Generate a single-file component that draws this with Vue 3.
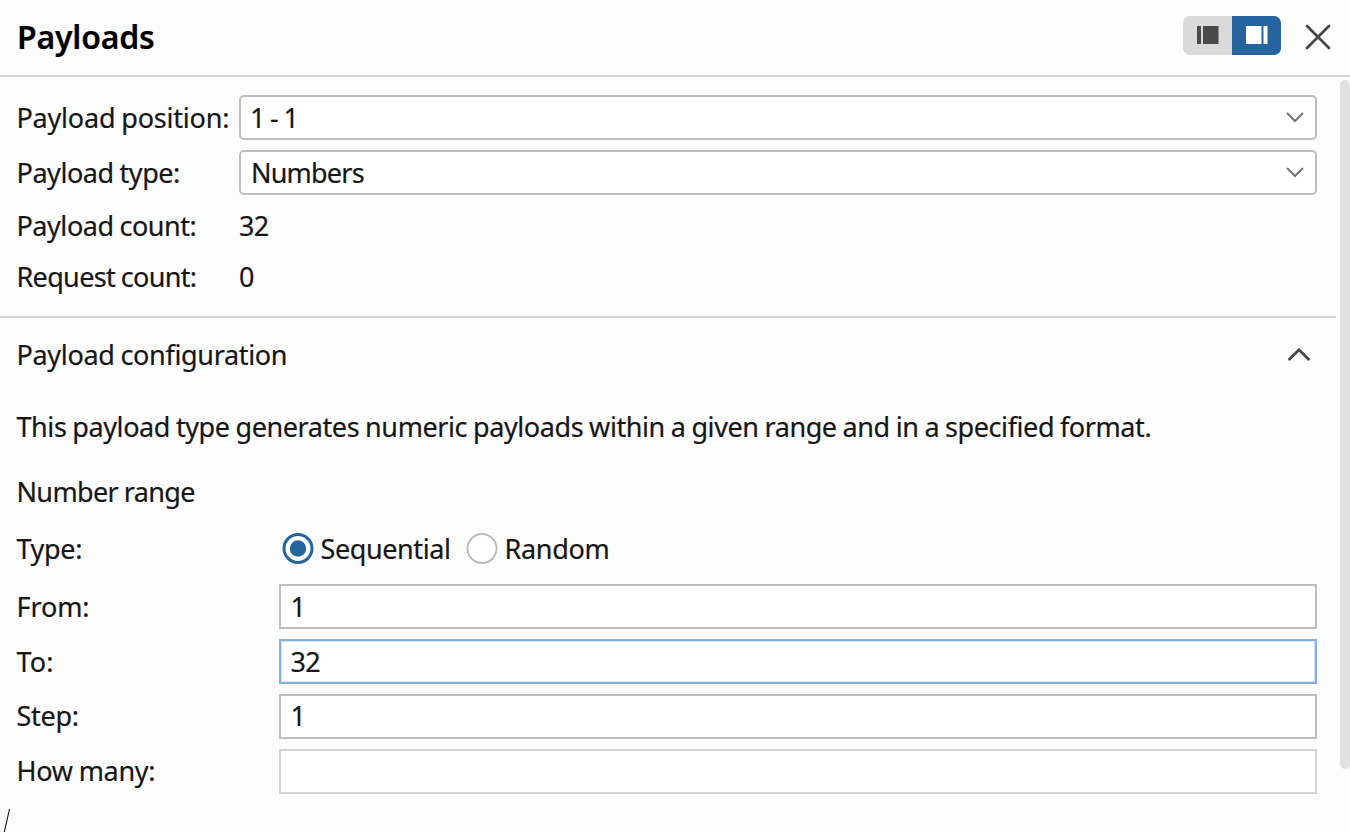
<script setup>
import { ref } from 'vue'

const position = ref('1 - 1')
const type = ref('Numbers')
const fields = ref([
  { key: 'from', label: 'From:', value: '1' },
  { key: 'to', label: 'To:', value: '32' },
  { key: 'step', label: 'Step:', value: '1' },
  { key: 'many', label: 'How many:', value: '' }
])
</script>

<template>
  <main class="panel">
    <header class="head">
      <h1 class="title">Payloads</h1>
      <div class="tools">
        <div class="toggle">
          <button class="seg">
            <svg width="22" height="18" viewBox="0 0 22 18"><path d="M0 0h4v18H0zM6 0h15.500v18H6z" fill="#4a4a4a" /></svg>
          </button>
          <button class="seg on">
            <svg width="22" height="18" viewBox="0 0 22 18"><path d="M0 0h15.500v18H0zM17.500 0h4v18h-4z" fill="#fff" /></svg>
          </button>
        </div>
        <svg class="close" width="26" height="26" viewBox="0 0 26 26"><path d="M2 2l22 22M24 2L2 24" fill="none" stroke="#484848" stroke-width="2.800" stroke-linecap="round" /></svg>
      </div>
    </header>

    <div class="body">
      <div class="content">
        <section class="summary">
          <div class="row combo-row">
            <span class="label"><span class="t-position">Payload position:</span></span>
            <div class="combo"><span class="t-one">{{ position }}</span>
              <svg width="18" height="11" viewBox="0 0 18 11"><path d="M1.500 1.500L9 9l7.500-7.500" fill="none" stroke="#757575" stroke-width="2" stroke-linecap="round" /></svg>
            </div>
          </div>
          <div class="row combo-row">
            <span class="label"><span class="t-type">Payload type:</span></span>
            <div class="combo"><span class="t-numbers">{{ type }}</span>
              <svg width="18" height="11" viewBox="0 0 18 11"><path d="M1.500 1.500L9 9l7.500-7.500" fill="none" stroke="#757575" stroke-width="2" stroke-linecap="round" /></svg>
            </div>
          </div>
          <div class="row count-row"><span class="label"><span class="t-pcount">Payload count:</span></span><span class="t-value">32</span></div>
          <div class="row count-row"><span class="label"><span class="t-rcount">Request count:</span></span><span class="t-value">0</span></div>
        </section>

        <section class="config">
          <div class="config-head">
            <h2 class="t-config">Payload configuration</h2>
            <svg width="24" height="14" viewBox="0 0 24 14"><path d="M2.500 11.300L12 1.800l9.500 9.500" fill="none" stroke="#484848" stroke-width="2.800" stroke-linecap="round" /></svg>
          </div>
          <p class="desc"><span class="t-desc">This payload type generates numeric payloads within a given range and in a specified format.</span></p>
          <h3 class="range"><span class="t-range">Number range</span></h3>
          <div class="type-row">
            <span class="flabel"><span class="t-kind">Type:</span></span>
            <div class="radio">
              <svg width="32" height="32" viewBox="0 0 32 32"><circle cx="16" cy="15.500" r="14" fill="#fff" stroke="#26649f" stroke-width="3" /><circle cx="16" cy="15.500" r="8.200" fill="#26649f" /></svg>
              <span class="t-seq">Sequential</span>
            </div>
            <div class="radio second">
              <svg width="32" height="32" viewBox="0 0 32 32"><circle cx="16" cy="15.500" r="14.500" fill="#fff" stroke="#b9b9b9" stroke-width="1.800" /></svg>
              <span class="t-random">Random</span>
            </div>
          </div>
          <div class="fields">
            <div v-for="f in fields" :key="f.key" class="field">
              <span class="flabel"><span :class="'t-' + f.key">{{ f.label }}</span></span>
              <div class="input" :class="{ focus: f.key === 'to', disabled: f.key === 'many' }"><span class="t-value">{{ f.value }}</span></div>
            </div>
          </div>
        </section>
      </div>
      <div class="scroll"></div>
    </div>
    <svg class="mark" width="12" height="25" viewBox="0 0 12 25"><path d="M9.500 2L4.300 25" fill="none" stroke="#111" stroke-width="1.100" /></svg>
  </main>
</template>

<style>
body { margin: 0; overflow: hidden; background: #fcfcfc; }
</style>

<style scoped>
.panel {
  position: relative;
  width: 1350px;
  height: 832px;
  overflow: hidden;
  background: #fcfcfc;
  color: #161616;
  font-family: "Noto Sans", sans-serif;
  font-size: 27px;
  line-height: 36px;
  word-spacing: -0.700px;
  white-space: nowrap;
  -webkit-text-stroke: 0.200px currentColor;
}
h1, h2, h3, p { margin: 0; font-size: inherit; font-weight: 400; }
svg { display: block; flex: none; }
.head {
  box-sizing: border-box;
  height: 77px;
  border-bottom: 2px solid #d4d4d4;
  display: flex;
  align-items: center;
  justify-content: space-between;
  padding: 0 19px 0 17px;
}
.title { font-size: 32px; font-weight: 600; color: #000; letter-spacing: -0.200px; padding-bottom: 2px; }
.tools { display: flex; align-items: center; gap: 24px; margin-top: -4px; }
.toggle { display: flex; width: 98px; height: 39px; border-radius: 7px; overflow: hidden; }
.seg { flex: 1; border: 0; padding: 0 0 2px; background: #dadada; display: flex; align-items: center; justify-content: center; }
.seg.on { background: #26649f; }
.close { margin-top: 2px; }
.body { display: flex; justify-content: space-between; }
.content { width: 1336px; }
.scroll { width: 10px; height: 689px; margin-top: 3px; border-radius: 5px; background: #e1e1e1; }
.summary { border-bottom: 2px solid #d4d4d4; padding: 18px 19px 0 16.500px; height: 221px; }
.row { display: flex; align-items: center; }
.label { width: 222.500px; flex: none; }
.combo-row { height: 45px; margin-bottom: 10px; }
.combo {
  box-sizing: border-box;
  flex: 1;
  height: 45px;
  border: 2px solid #c1bcbd;
  border-radius: 5px;
  background: #fff;
  display: flex;
  align-items: center;
  justify-content: space-between;
  padding: 0 11px 0 10px;
}
.count-row { height: 51px; margin-top: -5px; margin-bottom: 5px; }
.config { padding: 0 19px 0 16.500px; }
.config-head { height: 73px; padding-bottom: 2px; display: flex; align-items: center; justify-content: space-between; padding-right: 6px; }
.desc { height: 68px; display: flex; align-items: center; }
.range { height: 62px; padding-bottom: 2px; display: flex; align-items: center; }
.type-row { height: 48px; display: flex; align-items: center; }
.flabel { width: 262.500px; flex: none; }
.radio { display: flex; align-items: center; gap: 6.500px; width: 184px; margin-left: 3px; }
.radio.second { margin-left: 0; }
.fields { display: flex; flex-direction: column; gap: 9.900px; margin-top: 11.200px; }
.field { display: flex; align-items: center; height: 45px; }
.input {
  box-sizing: border-box;
  flex: 1;
  height: 45px;
  border: 2px solid #c1bcbd;
  background: #fff;
  display: flex;
  align-items: center;
  padding-left: 9.500px;
}
.input.focus { border-color: #87afdb; box-shadow: inset 0 0 0 1px #d5e9fc; }
.input.disabled { border-color: #d3d3d3; }
.mark { position: absolute; left: 0; bottom: 0; }

.t-value { letter-spacing: -0.700px; }
.t-one { word-spacing: -2.400px; margin-left: -1px; }
.t-numbers { letter-spacing: -0.800px; }
.t-position { letter-spacing: -0.220px; }
.t-type { letter-spacing: -0.450px; }
.t-pcount { letter-spacing: -0.460px; }
.t-rcount { letter-spacing: -0.670px; }
.t-config { letter-spacing: -0.330px; }
.t-desc { letter-spacing: -0.415px; }
.t-range { letter-spacing: -0.650px; }
.t-kind { letter-spacing: -0.350px; }
.t-seq { letter-spacing: -0.400px; }
.t-random { letter-spacing: -0.300px; }
.t-from { letter-spacing: -0.100px; }
.t-to { letter-spacing: 0.200px; }
.t-step { letter-spacing: -0.300px; }
.t-many { letter-spacing: -0.300px; }
</style>
